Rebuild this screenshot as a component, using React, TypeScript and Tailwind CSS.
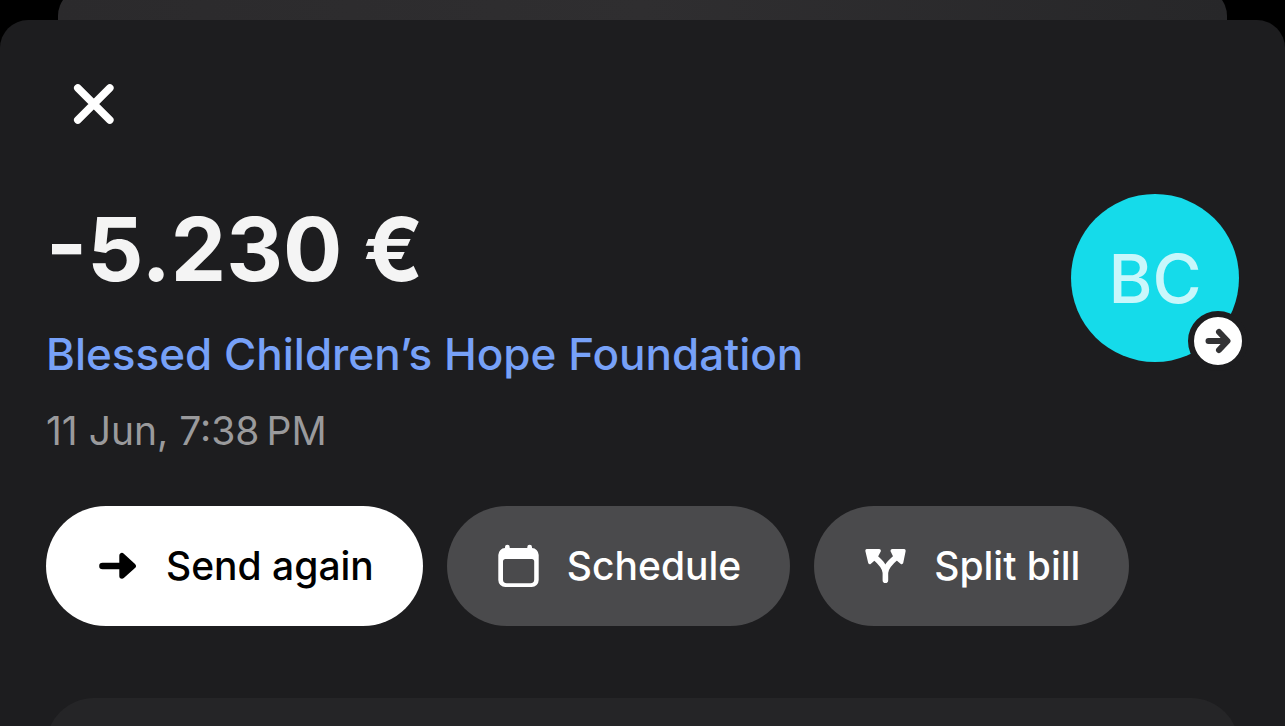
import React from 'react';

const SendIcon = () => (
  <svg viewBox="0 0 48 48" className="w-12 h-12 shrink-0" aria-hidden="true">
    <path d="M8.5 24H28" stroke="currentColor" strokeWidth="6.6" strokeLinecap="round" />
    <path d="M28 13.7V34L39.2 24Z" fill="currentColor" stroke="currentColor" strokeWidth="5.4" strokeLinejoin="round" />
  </svg>
);

const CalendarIcon = () => (
  <svg viewBox="0 0 48 48" className="w-12 h-12 shrink-0" aria-hidden="true">
    <path
      fill="currentColor"
      fillRule="evenodd"
      d="M10 6V5a2.3 2.3 0 0 1 4.7 0V6H32.3V5a2.3 2.3 0 0 1 4.7 0V6A7 7 0 0 1 43.7 13V38a7 7 0 0 1-7 7H10.3a7 7 0 0 1-7-7V13A7 7 0 0 1 10 6ZM10.5 17A2.5 2.5 0 0 0 8 19.5V37.5A3.8 3.8 0 0 0 11.8 41.3H35.4A3.8 3.8 0 0 0 39.2 37.5V19.5A2.5 2.5 0 0 0 36.7 17Z"
    />
  </svg>
);

const SplitIcon = () => (
  <svg viewBox="0 0 48 48" className="w-12 h-12 shrink-0" aria-hidden="true">
    <path
      d="M23.4 38.2V31C23.4 25 19 20.5 12.5 15M23.4 31C23.4 25 28 20.5 34.5 15"
      fill="none"
      stroke="currentColor"
      strokeWidth="5.6"
      strokeLinecap="round"
    />
    <path
      d="M5 8.7H17.2L13.8 15.2L7.8 20.4ZM42 8.7H30.2L33.4 15.2L39.6 20.4Z"
      fill="currentColor"
      stroke="currentColor"
      strokeWidth="3.4"
      strokeLinejoin="round"
    />
  </svg>
);

const actions = [
  { label: 'Send again', icon: SendIcon, style: 'bg-white text-black' },
  { label: 'Schedule', icon: CalendarIcon, style: 'bg-[#4a4a4c] text-white' },
  { label: 'Split bill', icon: SplitIcon, style: 'bg-[#4a4a4c] text-white' },
];

export default function App() {
  return (
    <div className="h-screen overflow-hidden flex flex-col bg-black font-['Inter',sans-serif]">
      {/* edge of the sheet behind */}
      <div className="h-5 shrink-0 overflow-hidden px-[58px]">
        <div className="-mt-3 h-20 rounded-t-[28px] bg-linear-to-r from-[#2b2a2c] via-[#2f2e30] to-[#272729]" />
      </div>

      <main className="flex-1 rounded-t-[28px] bg-[#1d1d1f] px-[46px] pt-9 overflow-hidden">
        <button type="button" aria-label="Close" className="w-24 h-24 flex items-center justify-center text-white cursor-pointer">
          <svg viewBox="0 0 48 48" className="w-12 h-12" aria-hidden="true">
            <path d="M7.8 8L39.8 40M39.8 8L7.8 40" stroke="currentColor" strokeWidth="7.6" strokeLinecap="round" />
          </svg>
        </button>

        <div className="flex items-start justify-between pt-[42px]">
          <div className="pt-2">
            <h1 className="text-[88px] leading-[94px] font-bold text-[#f4f4f4]">-5.230 €</h1>
            <a href="#recipient" className="block mt-6 text-[44px] leading-[68px] font-medium text-[#77a1f8]">
              Blessed Children’s Hope Foundation
            </a>
            <p className="mt-5 text-[39px] leading-[46px] text-[#9a9a9c]">11 Jun, 7:38{'\u202f'}PM</p>
          </div>

          <div className="relative w-42 h-42 shrink-0 rounded-full bg-[#15dbea] flex items-center justify-center">
            <span className="text-[67px] leading-none font-medium text-[#c9f7fb]">BC</span>
            <div className="absolute -right-[9px] -bottom-[9px] w-15 h-15 rounded-full border-6 border-[#1d1d1f] bg-white text-[#333335]">
              <svg viewBox="0 0 48 48" className="w-12 h-12" aria-hidden="true">
                <path
                  d="M14.5 24H33M25 15L33.5 24L25 33"
                  fill="none"
                  stroke="currentColor"
                  strokeWidth="6"
                  strokeLinecap="round"
                  strokeLinejoin="round"
                />
              </svg>
            </div>
          </div>
        </div>

        <div className="flex gap-6 mt-[52px]">
          {actions.map(({ label, icon: Icon, style }) => (
            <button
              key={label}
              type="button"
              className={`h-30 pl-12 pr-[49px] flex items-center gap-6 rounded-full text-[39px] font-medium whitespace-nowrap cursor-pointer ${style}`}
            >
              <Icon />
              {label}
            </button>
          ))}
        </div>

        {/* details card, continues below the fold */}
        <div className="mt-18 h-60 rounded-[48px] bg-[#252527]" />
      </main>
    </div>
  );
}
